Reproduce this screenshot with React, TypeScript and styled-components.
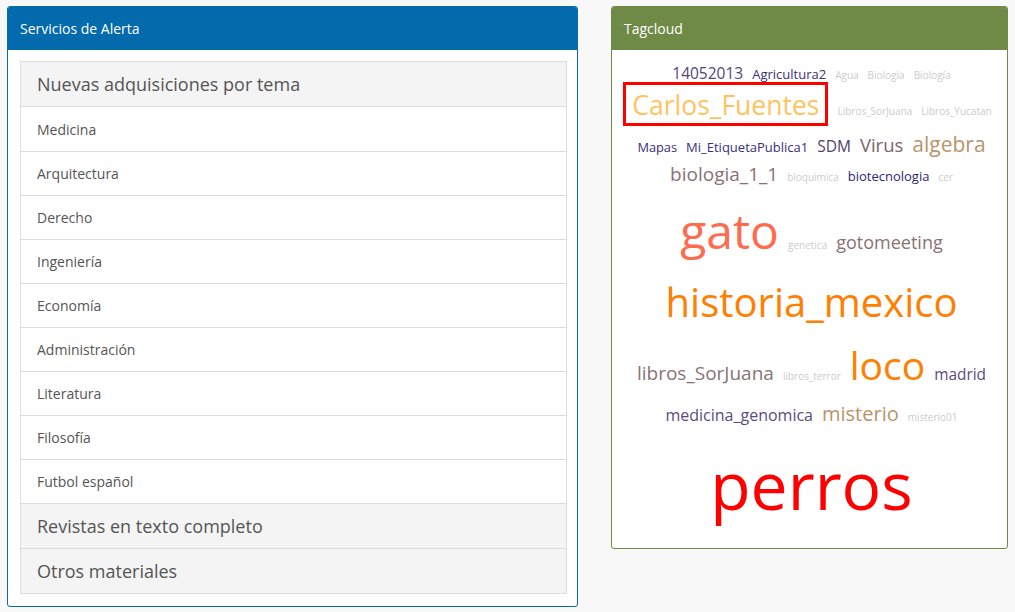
import React from "react";
import styled, { createGlobalStyle } from "styled-components";

const Global = createGlobalStyle`
  html, body { margin: 0; padding: 0; background: #f8f8f8; }
  body { font-family: "Open Sans", "Noto Sans", sans-serif; }
`;

const Page = styled.div`
  display: flex;
  align-items: flex-start;
  gap: 33px;
  padding: 6px 7px;
`;

const Panel = styled.section<{ $color: string; $width: number }>`
  width: ${(p) => p.$width}px;
  box-sizing: border-box;
  background: #fff;
  border: 1px solid ${(p) => p.$color};
  border-radius: 3px;
  overflow: hidden;
`;

const PanelHeader = styled.header<{ $color: string }>`
  height: 43px;
  background: ${(p) => p.$color};
  color: #fff;
  font-size: 14px;
  display: flex;
  align-items: center;
  padding-left: 12px;
`;

const PanelBody = styled.div`
  padding: 11px 10px 12px 12px;
`;

const Accordion = styled.div`
  border: 1px solid #ddd;
  border-top: none;
`;

const SectionHeader = styled.div`
  height: 45px;
  box-sizing: border-box;
  background: #f4f4f4;
  border-top: 1px solid #ddd;
  color: #555;
  font-size: 18px;
  display: flex;
  align-items: center;
  padding-left: 16px;
`;

const List = styled.ul`
  list-style: none;
  margin: 0;
  padding: 0;
  border-top: 1px solid #ddd;
`;

const Item = styled.li`
  height: 44px;
  box-sizing: border-box;
  border-top: 1px solid #ddd;
  color: #555;
  font-size: 14px;
  display: flex;
  align-items: center;
  padding-left: 16px;
  &:first-child { border-top: none; }
`;

const Cloud = styled.div`
  display: flex;
  flex-direction: column;
  padding: 16px 0 31px;
`;

const TagLine = styled.div<{ $mt: number; $dx: number }>`
  display: flex;
  align-items: baseline;
  justify-content: center;
  gap: 9px;
  margin-top: ${(p) => p.$mt}px;
  margin-left: ${(p) => 4 + p.$dx}px;
`;

const Tag = styled.span<{ $size: number; $color: string }>`
  font-size: ${(p) => p.$size}px;
  color: ${(p) => p.$color};
  line-height: 1;
  white-space: nowrap;
`;

const Highlight = styled(Tag)`
  border: 3px solid #ff0000;
  padding: 7px 6px 5px;
`;

const LIGHT = "#cbcbcb";

const items = [
  "Medicina",
  "Arquitectura",
  "Derecho",
  "Ingeniería",
  "Economía",
  "Administración",
  "Literatura",
  "Filosofía",
  "Futbol español",
];

type T = [string, number, string];

const lines: { mt: number; dx?: number; tags: T[] }[] = [
  {
    mt: 0,
    tags: [
      ["14052013", 15.5, "#524577"],
      ["Agricultura2", 13, "#3b2f78"],
      ["Agua", 10, LIGHT],
      ["Biologia", 10, LIGHT],
      ["Biología", 10, LIGHT],
    ],
  },
  {
    mt: 0,
    dx: -8,
    tags: [
      ["Carlos_Fuentes", 26.5, "#ffc35e"],
      ["Libros_SorJuana", 10, LIGHT],
      ["Libros_Yucatan", 10, LIGHT],
    ],
  },
  {
    mt: 8,
    tags: [
      ["Mapas", 12.8, "#372f7c"],
      ["Mi_EtiquetaPublica1", 13, "#372f7c"],
      ["SDM", 15.5, "#4f416f"],
      ["Virus", 18.5, "#7b6567"],
      ["algebra", 21, "#b8946b"],
    ],
  },
  {
    mt: 10,
    tags: [
      ["biologia_1_1", 19, "#8a7274"],
      ["bioquimica", 10, LIGHT],
      ["biotecnologia", 13, "#2c2872"],
      ["cer", 10, LIGHT],
    ],
  },
  {
    mt: 23,
    tags: [
      ["gato", 48, "#ff6b4f"],
      ["genetica", 10, LIGHT],
      ["gotomeeting", 18, "#8a7274"],
    ],
  },
  { mt: 27, tags: [["historia_mexico", 40, "#ff7f00"]] },
  {
    mt: 23,
    tags: [
      ["libros_SorJuana", 19, "#8a7274"],
      ["libros_terror", 10, LIGHT],
      ["loco", 39, "#ff7f00"],
      ["madrid", 15.4, "#5b4b7f"],
    ],
  },
  {
    mt: 20,
    tags: [
      ["medicina_genomica", 16, "#5b4b7f"],
      ["misterio", 20, "#b8946b"],
      ["misterio01", 10, LIGHT],
    ],
  },
  { mt: 27, tags: [["perros", 66, "#ff0000"]] },
];

export default function App() {
  return (
    <>
      <Global />
      <Page>
        <Panel $color="#0a6aab" $width={571}>
          <PanelHeader $color="#036aab">Servicios de Alerta</PanelHeader>
          <PanelBody>
            <Accordion>
              <SectionHeader>Nuevas adquisiciones por tema</SectionHeader>
              <List>
                {items.map((it) => (
                  <Item key={it}>{it}</Item>
                ))}
              </List>
              <SectionHeader>Revistas en texto completo</SectionHeader>
              <SectionHeader>Otros materiales</SectionHeader>
            </Accordion>
          </PanelBody>
        </Panel>
        <Panel $color="#6f8946" $width={397}>
          <PanelHeader $color="#6f8946">Tagcloud</PanelHeader>
          <Cloud>
            {lines.map((l, i) => (
              <TagLine key={i} $mt={l.mt} $dx={l.dx ?? 0}>
                {l.tags.map(([t, s, c]) =>
                  t === "Carlos_Fuentes" ? (
                    <Highlight key={t} $size={s} $color={c}>
                      {t}
                    </Highlight>
                  ) : (
                    <Tag key={t} $size={s} $color={c}>
                      {t}
                    </Tag>
                  )
                )}
              </TagLine>
            ))}
          </Cloud>
        </Panel>
      </Page>
    </>
  );
}
